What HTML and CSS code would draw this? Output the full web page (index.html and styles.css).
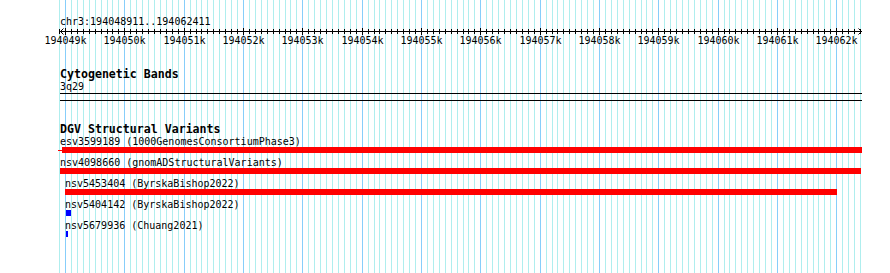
FILE: index.html
```html
<!DOCTYPE html>
<html lang="en">
<head>
    <meta charset="UTF-8">
    <title>chr3:194048911..194062411</title>
    <link rel="stylesheet" href="styles.css">
</head>
<body>
    <svg class="grid" id="grid" width="890" height="273"></svg>

    <div class="view">
        <div class="locus">chr3:194048911..194062411</div>
        <svg class="ruler" id="ruler" width="890" height="19"></svg>

        <div class="track">
            <div class="track-label">Cytogenetic Bands</div>
            <div class="band-name">3q29</div>
            <div class="band"></div>
        </div>

        <div class="track">
            <div class="track-label">DGV Structural Variants</div>
            <div class="feature">
                <div class="feature-label" style="margin-left: 60px">esv3599189 (1000GenomesConsortiumPhase3)</div>
                <div class="feature-bar red clipped" style="margin-left: 62px; width: 800px"></div>
            </div>
            <div class="feature">
                <div class="feature-label" style="margin-left: 60px">nsv4098660 (gnomADStructuralVariants)</div>
                <div class="feature-bar red" style="margin-left: 60px; width: 801px"></div>
            </div>
            <div class="feature">
                <div class="feature-label" style="margin-left: 65px">nsv5453404 (ByrskaBishop2022)</div>
                <div class="feature-bar red" style="margin-left: 65px; width: 772px"></div>
            </div>
            <div class="feature">
                <div class="feature-label" style="margin-left: 65px">nsv5404142 (ByrskaBishop2022)</div>
                <div class="feature-bar blue" style="margin-left: 66px; width: 5px"></div>
            </div>
            <div class="feature">
                <div class="feature-label" style="margin-left: 65px">nsv5679936 (Chuang2021)</div>
                <div class="feature-bar blue" style="margin-left: 66px; width: 2px"></div>
            </div>
        </div>
    </div>

    <script>
        // 194049k sits at x=65, ~59.33px per kb
        const BP0 = 194049000;
        const X0 = 65;
        const PX_PER_BP = 0.05933;
        const SVG_NS = "http://www.w3.org/2000/svg";

        function xOf(bp) {
            return Math.round(X0 + (bp - BP0) * PX_PER_BP) + 0.5;
        }

        function add(parent, tag, attrs, text) {
            const el = document.createElementNS(SVG_NS, tag);
            for (const k in attrs) el.setAttribute(k, attrs[k]);
            if (text) el.textContent = text;
            parent.appendChild(el);
            return el;
        }

        const grid = document.getElementById("grid");
        const ruler = document.getElementById("ruler");

        for (let bp = 194048900; bp <= 194062400; bp += 100) {
            const x = xOf(bp);
            const major = bp % 1000 === 0;
            add(grid, "line", { x1: x, x2: x, y1: 0, y2: 273, class: major ? "major" : "minor" });
            add(ruler, "line", { x1: x, x2: x, y1: major ? 1 : 2, y2: major ? 8 : 7 });
            if (major) {
                add(ruler, "text", { x: x, y: 17 }, (bp / 1000) + "k");
            }
        }

        // axis with arrow heads
        add(ruler, "line", { x1: 60, x2: 862, y1: 4.5, y2: 4.5 });
        add(ruler, "polyline", { points: "63.5,1.5 60.5,4.5 63.5,7.5", class: "arrow" });
        add(ruler, "polyline", { points: "858.5,1.5 861.5,4.5 858.5,7.5", class: "arrow" });
    </script>
</body>
</html>
```

FILE: styles.css
```css
body {
  margin: 0;
  background-color: #fff;
  color: #000;
  font-family: "DejaVu Sans Mono", "Liberation Mono", monospace;
  font-size: 10px;
}

/* grid lines sit behind everything */
.grid {
  position: absolute;
  top: 0;
  left: 0;
}
.grid line { stroke-width: 1; }
.grid .minor { stroke: #afeeee; }
.grid .major { stroke: #87cefa; }

.view {
  position: relative;
}

.locus {
  padding: 16px 0 0 60px;
  line-height: 11px;
}

.ruler {
  display: block;
}
.ruler line { stroke: #000; stroke-width: 1; }
.ruler .arrow { fill: none; stroke: #000; stroke-width: 1; }
.ruler text {
  font-family: "DejaVu Sans Mono", monospace;
  font-size: 10px;
  text-anchor: middle;
  fill: #000;
}

.track {
  margin-top: 22px;
}
.track-label {
  padding-left: 60px;
  font-weight: bold;
  font-size: 11.6px;
  line-height: 13px;
}

.band-name {
  padding-left: 60px;
  line-height: 12px;
}
.band {
  margin-left: 60px;
  width: 802px;
  height: 6px;
  border-top: 1px solid #000;
  border-bottom: 1px solid #000;
}

.feature {
  height: 21px;
}
.feature-label {
  line-height: 11px;
  white-space: nowrap;
}
.feature-bar {
  position: relative;
  height: 6px;
}
.feature-bar.red { background-color: #f00; }
.feature-bar.blue { background-color: #00f; }

/* feature runs off the left edge */
.feature-bar.clipped::before {
  content: "";
  position: absolute;
  left: -4px;
  top: 3px;
  width: 4px;
  height: 1px;
  background-color: #f00;
}
```
